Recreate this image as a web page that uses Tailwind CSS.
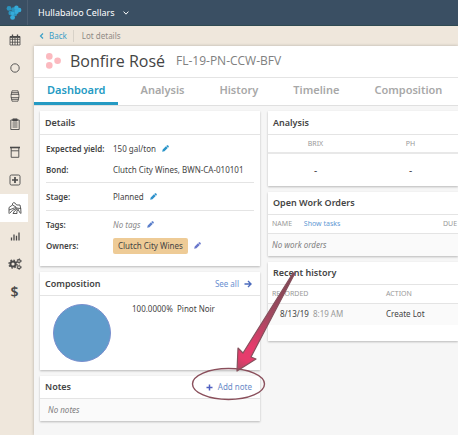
<!DOCTYPE html>
<html lang="en">
  <head>
    <meta charset="UTF-8" />
    <meta name="viewport" content="width=device-width, initial-scale=1.0" />
    <title>Bonfire Rosé - Lot details</title>
    <script src="https://cdn.jsdelivr.net/npm/@tailwindcss/browser@4"></script>
  </head>
  <body
    class="relative flex flex-col min-h-screen overflow-x-hidden bg-[#efe7dc] font-['Noto_Sans','Open_Sans',sans-serif] text-[8px] leading-3 text-[#444]"
  >
    <svg class="hidden">
      <symbol id="pencil" viewBox="0 0 8 8">
        <path d="M0.2 7.8 L0.8 5.2 L4.5 1.5 L6.5 3.5 L2.8 7.2 Z M4.9 1.1 L5.8 0.3 Q6.3 0 6.8 0.4 L7.6 1.2 Q8 1.7 7.7 2.2 L6.9 3.1 Z" />
      </symbol>
    </svg>

    <!-- Top bar -->
    <header class="flex h-[26px] border-b border-[#2f4a52] bg-[#3a4f63] text-white">
      <a href="#" aria-label="Home" class="flex w-7 items-center justify-center border-r border-[#4b5d70]">
        <svg class="size-4" viewBox="0 0 16 16">
          <g fill="#2b93bd">
            <circle cx="3" cy="3.4" r="2.4" />
            <circle cx="7.6" cy="4.6" r="2.4" />
            <circle cx="4.6" cy="8" r="2.2" />
            <circle cx="9" cy="9" r="2.2" />
          </g>
          <g fill="#35abd9">
            <circle cx="10.4" cy="2.8" r="2.2" />
            <circle cx="13.2" cy="5" r="2.2" />
            <circle cx="10.6" cy="6.8" r="2.2" />
            <circle cx="6.6" cy="12.4" r="2.4" />
            <circle cx="6.6" cy="8.4" r="1.8" />
          </g>
        </svg>
      </a>
      <button class="flex items-center gap-[8px] px-[10px] text-[9px]">
        Hullabaloo Cellars
        <svg class="size-[6px]" viewBox="0 0 6 6" fill="none" stroke="currentColor">
          <path d="M0.6 1.6 L3 4.2 L5.4 1.6" />
        </svg>
      </button>
    </header>

    <div class="flex grow">
      <!-- Sidebar -->
      <nav class="flex w-7 shrink-0 flex-col text-[#4a4a4a] *:flex *:h-7 *:items-center *:justify-center *:pl-px">
        <a href="#" aria-label="Calendar">
          <svg class="size-3" viewBox="0 0 12 12" fill="none" stroke="currentColor">
            <path d="M1 2.5H11V11H1Z M1 5.3H11 M1 8.2H11 M3.5 4V11 M6 4V11 M8.5 4V11" stroke-width=".8" />
            <path d="M1 3H11" stroke-width="1.8" />
            <path d="M3.5 0.5V3 M8.5 0.5V3" stroke-width="1.3" />
          </svg>
        </a>
        <a href="#" aria-label="Lots">
          <svg class="size-3" viewBox="0 0 12 12" fill="none" stroke="currentColor">
            <circle cx="6" cy="6" r="4.2" stroke-width=".9" />
          </svg>
        </a>
        <a href="#" aria-label="Barrels">
          <svg class="size-3" viewBox="0 0 12 12" fill="none" stroke="currentColor">
            <path d="M3 0.8H9Q11 6 9 11.2H3Q1 6 3 0.8Z M2.4 2.6H9.6 M2.4 9.4H9.6" stroke-width=".8" />
            <path d="M1.8 4.3H10.2 M1.8 7.7H10.2" stroke-width=".9" />
          </svg>
        </a>
        <a href="#" aria-label="Work orders">
          <svg class="size-3" viewBox="0 0 12 12" fill="none" stroke="currentColor">
            <path d="M1.8 2H10.2V11.5H1.8Z M3.5 5H8.5 M3.5 7H8.5 M3.5 9H8.5" stroke-width=".9" />
            <path d="M3.8 0.9H8.2V3H3.8Z" fill="currentColor" stroke-width=".8" />
          </svg>
        </a>
        <a href="#" aria-label="Tanks">
          <svg class="size-3" viewBox="0 0 12 12" fill="none" stroke="currentColor">
            <path d="M1 1.5H11" stroke-width="1.6" />
            <path d="M2.2 2V11.3H9.8V2 M2.2 4.8H9.8" stroke-width=".9" />
          </svg>
        </a>
        <a href="#" aria-label="Additives">
          <svg class="size-3" viewBox="0 0 12 12" fill="none" stroke="currentColor">
            <rect x="1" y="1" width="10" height="10" rx="1.5" stroke-width=".9" />
            <path d="M6 3V9 M3 6H9" stroke-width="1.7" />
          </svg>
        </a>
        <a href="#" aria-label="Vineyards" class="bg-white">
          <svg class="size-[14px]" viewBox="0 0 14 14" fill="none" stroke="currentColor" stroke-width=".9">
            <path d="M1 12.5V6.5L4.5 4L8 6V7 M4.5 4V2.5Q5.8 0.8 7.2 2.2L8.6 4H12Q13 7 13 12.5" />
            <path d="M1 9Q6 5.5 13 7.5 M1.5 12.5Q4 8.5 8.5 7.5 M5 12.5Q6 9.5 9.5 8 M5 12.5H9 M9 12.5Q8 10 10.5 8 M12.5 12.5L10 8.5" />
          </svg>
        </a>
        <a href="#" aria-label="Reports">
          <svg class="size-3" viewBox="0 0 12 12" fill="none" stroke="currentColor" stroke-width="1.3">
            <path d="M2.5 10.5V7.5 M5 10.5V4.5 M7.5 10.5V5.8 M10 10.5V2.5" />
          </svg>
        </a>
        <a href="#" aria-label="Settings">
          <svg class="size-[14px]" viewBox="0 0 14 14" fill="none" stroke="currentColor">
            <circle cx="5" cy="7" r="2.6" stroke-width="2" />
            <circle cx="5" cy="7" r="4" stroke-width="1.3" stroke-dasharray="1.57 1.57" />
            <circle cx="11" cy="4" r="1.4" stroke-width="1.1" />
            <circle cx="11" cy="4" r="2.2" stroke-width=".8" stroke-dasharray="1.15 1.15" />
            <circle cx="11" cy="10.2" r="1.4" stroke-width="1.1" />
            <circle cx="11" cy="10.2" r="2.2" stroke-width=".8" stroke-dasharray="1.15 1.15" />
          </svg>
        </a>
        <a href="#" aria-label="Costs" class="text-[14px] font-semibold">$</a>
      </nav>

      <div class="flex min-w-0 grow flex-col pl-[6px]">
        <!-- Breadcrumbs -->
        <div class="flex h-5 items-center pl-[5px] text-[#8f8b85]">
          <a href="#" class="flex items-center gap-[4px] text-[#3a9fc8]">
            <svg class="size-[6px]" viewBox="0 0 6 6" fill="none" stroke="currentColor" stroke-width="1.2">
              <path d="M4 0.5L1.5 3L4 5.5" />
            </svg>
            Back
          </a>
          <span class="ml-[6px] border-l border-[#d8d2c8] pl-2">Lot details</span>
        </div>

        <main class="flex grow flex-col bg-[#f6f6f6] shadow-[0_0_3px_rgba(0,0,0,0.25)]">
          <div class="flex h-8 items-center border-b border-[#e4e4e4] bg-white pb-px pl-[11px] font-['Open_Sans','Noto_Sans',sans-serif]">
            <svg class="size-4" viewBox="0 0 16 16" fill="#fbb9bf">
              <circle cx="4.3" cy="3.4" r="3.3" />
              <circle cx="12.6" cy="7.8" r="3.3" />
              <circle cx="4.3" cy="12.4" r="3.3" />
            </svg>
            <h1 class="ml-[9px] text-[16px] leading-6">Bonfire Rosé</h1>
            <span class="ml-[11px] text-[12px] leading-6 text-[#808080]">FL-19-PN-CCW-BFV</span>
          </div>
          <nav class="flex h-7 gap-[9px] border-b border-[#e0e0e0] bg-white text-[11px] font-semibold text-[#a8a8a8] *:px-[13px] *:leading-6">
            <a href="#" class="border-b-3 border-[#249ac3] text-[#249ac3]">Dashboard</a>
            <a href="#">Analysis</a>
            <a href="#">History</a>
            <a href="#">Timeline</a>
            <a href="#">Composition</a>
          </nav>

          <div class="grid grid-cols-[220px_1fr] items-start gap-2 pt-[5px] pl-[6px]">
            <div class="flex flex-col gap-[6px] *:bg-white *:shadow-[0_1px_2px_rgba(0,0,0,0.25)]">
              <section>
                <h2 class="flex h-6 items-center border-b border-[#e4e4e4] px-[5px] text-[9px] font-semibold">Details</h2>
                <dl class="px-[6px] [&_dt]:w-[67px] [&_dt]:font-semibold [&_dd]:flex [&_dd]:items-center [&_dd]:gap-[6px]">
                  <div class="border-b border-[#e4e4e4] pt-[3px] pb-[2px]">
                    <div class="flex h-[21px] items-center">
                      <dt>Expected yield:</dt>
                      <dd>
                        150 gal/ton
                        <button aria-label="Edit expected yield" class="text-[#2a95c9]"><svg class="size-[7px]" fill="currentColor"><use href="#pencil" /></svg></button>
                      </dd>
                    </div>
                    <div class="flex h-[21px] items-center">
                      <dt>Bond:</dt>
                      <dd>Clutch City Wines, BWN-CA-010101</dd>
                    </div>
                  </div>
                  <div class="border-b border-[#e4e4e4] py-[3px]">
                    <div class="flex h-[21px] items-center">
                      <dt>Stage:</dt>
                      <dd>
                        Planned
                        <button aria-label="Edit stage" class="text-[#2f92cc]"><svg class="size-[7px]" fill="currentColor"><use href="#pencil" /></svg></button>
                      </dd>
                    </div>
                  </div>
                  <div class="pt-[3px] pb-[10px]">
                    <div class="flex h-[21px] items-center">
                      <dt>Tags:</dt>
                      <dd>
                        <i class="text-[#8a8a8a]">No tags</i>
                        <button aria-label="Edit tags" class="text-[#5b7fcb]"><svg class="size-[7px]" fill="currentColor"><use href="#pencil" /></svg></button>
                      </dd>
                    </div>
                    <div class="flex h-[21px] items-center">
                      <dt>Owners:</dt>
                      <dd>
                        <span class="rounded-xs bg-[#eecb96] px-[5px] py-[2px]">Clutch City Wines</span>
                        <button aria-label="Edit owners" class="text-[#6a78cc]"><svg class="size-[7px]" fill="currentColor"><use href="#pencil" /></svg></button>
                      </dd>
                    </div>
                  </div>
                </dl>
              </section>

              <section>
                <div class="flex h-6 items-center justify-between border-b border-[#e4e4e4] pr-2 pl-[5px]">
                  <h2 class="text-[9px] font-semibold">Composition</h2>
                  <a href="#" class="flex items-center gap-[5px] text-[#6a8fd0]">
                    See all
                    <svg class="size-[8px] text-[#4c6bbd]" viewBox="0 0 8 8" fill="none" stroke="currentColor" stroke-width="1.4">
                      <path d="M0.5 4H7 M4 1L7 4L4 7" />
                    </svg>
                  </a>
                </div>
                <div class="flex gap-5 px-3 py-[7px]">
                  <svg class="size-[60px]" viewBox="0 0 60 60">
                    <circle cx="30" cy="30" r="28.5" fill="#5f9ccb" stroke="#7a8fce" />
                  </svg>
                  <p>100.0000%&nbsp; Pinot Noir</p>
                </div>
              </section>

              <section>
                <div class="flex h-[23px] items-center justify-between border-b border-[#e4e4e4] pr-2 pl-[5px]">
                  <h2 class="text-[9px] font-semibold">Notes</h2>
                  <button class="flex items-center gap-[5px] text-[#6a8bc8]">
                    <svg class="size-[7px] text-[#4f5fc0]" viewBox="0 0 7 7" fill="none" stroke="currentColor" stroke-width="1.5">
                      <path d="M3.5 0.5V6.5 M0.5 3.5H6.5" />
                    </svg>
                    Add note
                  </button>
                </div>
                <p class="bg-[#fafafa] px-2 py-[5px] text-[#808080] italic">No notes</p>
              </section>
            </div>

            <div class="flex min-w-0 flex-col gap-[6px] *:bg-white *:shadow-[0_1px_2px_rgba(0,0,0,0.25)] [&_th]:font-normal [&_th]:text-[#999]">
              <section>
                <h2 class="flex h-6 items-center border-b border-[#e4e4e4] px-[5px] text-[9px] font-semibold">Analysis</h2>
                <table class="w-full text-center">
                  <thead>
                    <tr class="h-[18px] border-b-2 border-[#e8e8e8] text-[7px]">
                      <th class="w-1/2">BRIX</th>
                      <th>PH</th>
                    </tr>
                  </thead>
                  <tbody>
                    <tr class="h-[33px] text-[10px]">
                      <td>-</td>
                      <td>-</td>
                    </tr>
                  </tbody>
                </table>
              </section>

              <section>
                <h2 class="flex h-[23px] items-center border-b border-[#e4e4e4] px-[5px] text-[9px] font-semibold">Open Work Orders</h2>
                <table class="w-full text-left">
                  <thead>
                    <tr class="h-[18px] border-b border-[#e4e4e4] text-[7px]">
                      <th class="pl-1">NAME <a href="#" class="ml-[10px] text-[7px] text-[#5f97d3]">Show tasks</a></th>
                      <th class="w-[15px]">DUE</th>
                    </tr>
                  </thead>
                  <tbody>
                    <tr class="h-[23px] bg-[#fafafa]">
                      <td colspan="2" class="pl-1 text-[#808080] italic">No work orders</td>
                    </tr>
                  </tbody>
                </table>
              </section>

              <section class="pb-4">
                <h2 class="flex h-[23px] items-center border-b border-[#e4e4e4] px-[5px] text-[9px] font-semibold">Recent history</h2>
                <table class="w-full text-left">
                  <thead>
                    <tr class="h-[18px] border-b border-[#e4e4e4] text-[7px]">
                      <th class="w-[118px] pl-1">RECORDED</th>
                      <th>ACTION</th>
                    </tr>
                  </thead>
                  <tbody>
                    <tr class="h-[22px] bg-[#fafafa]">
                      <td class="pl-3">8/13/19 <span class="ml-[2px] text-[#999]">8:19 AM</span></td>
                      <td>Create Lot</td>
                    </tr>
                  </tbody>
                </table>
              </section>
            </div>
          </div>
        </main>
      </div>
    </div>

    <!-- Callout drawn over the page -->
    <svg class="pointer-events-none absolute top-[268px] left-[188px] h-[136px] w-[112px]" viewBox="188 268 112 136">
      <defs>
        <linearGradient id="arrow" gradientUnits="userSpaceOnUse" x1="294" y1="273" x2="237" y2="371">
          <stop offset="0" stop-color="#7d4654" />
          <stop offset=".45" stop-color="#a34860" />
          <stop offset=".75" stop-color="#e63c6c" />
          <stop offset=".88" stop-color="#e63c6c" />
          <stop offset="1" stop-color="#a84a62" />
        </linearGradient>
      </defs>
      <path d="M295 273L251 357L256 359L237 371L238 348L243 353L293 273Z" fill="url(#arrow)" stroke="#85505c" stroke-width="1.2" stroke-linejoin="round" />
      <ellipse cx="228.5" cy="384" rx="36" ry="15.5" fill="none" stroke="#8a4f5b" stroke-width="1.4" />
    </svg>
  </body>
</html>
